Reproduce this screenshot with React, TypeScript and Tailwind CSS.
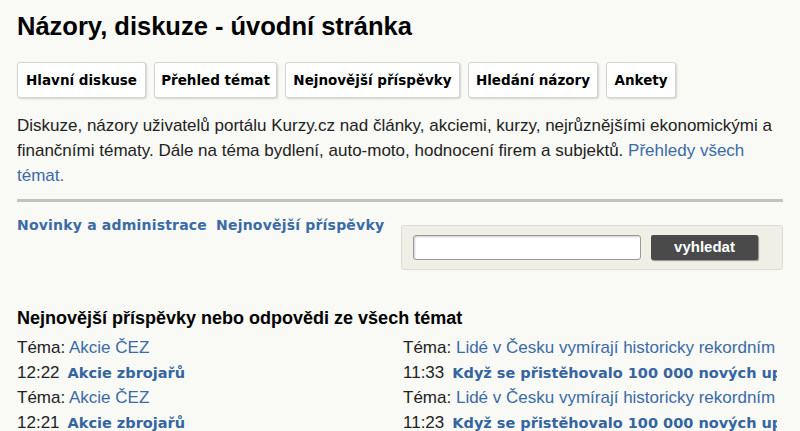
const tabs = [
  { label: 'Hlavní diskuse', w: 'w-[129px]' },
  { label: 'Přehled témat', w: 'w-[123px]' },
  { label: 'Nejnovější příspěvky', w: 'w-[175px]' },
  { label: 'Hledání názory', w: 'w-[130px]' },
  { label: 'Ankety', w: 'w-[70px]' },
]

const left = [
  { time: '12:22', topic: 'Akcie ČEZ', title: 'Akcie zbrojařů' },
  { time: '12:21', topic: 'Akcie ČEZ', title: 'Akcie zbrojařů' },
]

const right = [
  { time: '11:33', topic: 'Lidé v Česku vymírají historicky rekordním tempem', title: 'Když se přistěhovalo 100 000 nových uprchlíků' },
  { time: '11:23', topic: 'Lidé v Česku vymírají historicky rekordním tempem', title: 'Když se přistěhovalo 100 000 nových uprchlíků' },
]

const tahoma = "font-['DejaVu_Sans',Verdana,sans-serif]"

function PostColumn({ items }: { items: typeof left }) {
  return (
    <div className="flex flex-col overflow-hidden">
      {items.map((p, i) => (
        <div key={i} className="flex flex-col">
          <div className="h-[25px] whitespace-nowrap leading-[25px]">
            <span className="text-[#222]">Téma:</span>{' '}
            <a className="text-[#3a6ba6]">{p.topic}</a>
          </div>
          <div className="h-[25px] whitespace-nowrap leading-[25px]">
            <span className="text-[#222]">{p.time}</span>
            <a className={`ml-[8px] text-[14.5px] font-bold text-[#3465a0] ${tahoma}`}>{p.title}</a>
          </div>
        </div>
      ))}
    </div>
  )
}

export default function App() {
  return (
    <div className="min-h-screen bg-[#f9f9f5] px-[17px] pt-[9px] font-['Liberation_Sans',Arial,sans-serif] text-[17px] text-[#222]">
      <h1 className="text-[25.5px] font-bold leading-[34px] text-black">Názory, diskuze - úvodní stránka</h1>

      <div className="mt-[19px] flex gap-[8px]">
        {tabs.map((t) => (
          <div
            key={t.label}
            className={`${t.w} rounded-[3px] border border-[#d4d4d4] bg-white py-[8px] text-center text-[13.5px] font-bold leading-[18px] text-black shadow-[1px_1px_2px_rgba(0,0,0,0.15)] ${tahoma}`}
          >
            {t.label}
          </div>
        ))}
      </div>

      <p className="mt-[15px] text-[17px] leading-[25px]">
        Diskuze, názory uživatelů portálu Kurzy.cz nad články, akciemi, kurzy, nejrůznějšími ekonomickými a finančními tématy. Dále na téma bydlení, auto-moto, hodnocení firem a subjektů.{' '}
        <a className="text-[#3a6ba6]">Přehledy všech témat.</a>
      </p>

      <div className="mt-[11px] h-[3px] bg-[#c2c2c2]" />

      <div className="mt-[13px] flex items-start justify-between">
        <div className={`flex gap-[9px] text-[14px] font-bold tracking-[0.2px] text-[#3a6ba6] ${tahoma}`}>
          <a>Novinky a administrace</a>
          <a>Nejnovější příspěvky</a>
        </div>
        <div className="mt-[10px] flex w-[382px] items-center gap-[10px] rounded-[3px] border border-[#dcdcd2] bg-[#efefe6] px-[11px] py-[9px]">
          <div className="h-[25px] w-[228px] rounded-[3px] border border-[#9a9a9a] bg-white shadow-[inset_1px_1px_2px_rgba(0,0,0,0.2)]" />
          <div className="flex h-[25px] w-[107px] items-center justify-center rounded-[2px] bg-[#4a4a4a] text-[15px] font-bold text-white shadow-[1px_1px_1px_rgba(0,0,0,0.4)]">
            vyhledat
          </div>
        </div>
      </div>

      <h2 className="mt-[36px] text-[18px] font-bold leading-[24px] text-black">Nejnovější příspěvky nebo odpovědi ze všech témat</h2>

      <div className="mt-[5px] grid grid-cols-[386px_374px]">
        <PostColumn items={left} />
        <PostColumn items={right} />
      </div>
    </div>
  )
}
